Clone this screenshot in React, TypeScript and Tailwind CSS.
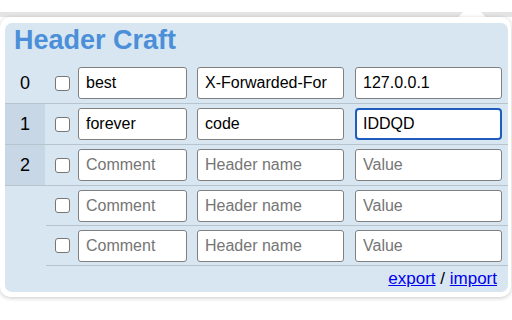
const rows = [
  { num: '0', comment: 'best', name: 'X-Forwarded-For', value: '127.0.0.1', dark: false },
  { num: '1', comment: 'forever', name: 'code', value: 'IDDQD', dark: true, focus: true },
  { num: '2', comment: '', name: '', value: '', dark: true },
  { num: '', comment: '', name: '', value: '', dark: false },
  { num: '', comment: '', name: '', value: '', dark: false },
];

function Field({ value, placeholder, width, focus }: { value: string; placeholder: string; width: string; focus?: boolean }) {
  return (
    <input
      readOnly
      defaultValue={value}
      placeholder={placeholder}
      className={
        'h-[32px] bg-white text-[16px] text-black placeholder:text-[#757575] outline-none ' +
        width +
        (focus
          ? ' border-2 border-[#1f5cc0] rounded-[4px] pl-[6px]'
          : ' border border-[#808080] rounded-[3px] pl-[7px]')
      }
    />
  );
}

export default function App() {
  return (
    <div className="relative w-[512px] h-[320px] bg-white overflow-hidden font-['Liberation_Sans',Arial,sans-serif]">
      {/* shadow band with the popup arrow */}
      <div className="absolute left-0 right-0 top-[12px] h-[5px] bg-[#e4e4e4]" />
      <svg className="absolute left-[454px] top-0" width="36" height="20" viewBox="0 0 36 20">
        <polygon points="18,1 3,19 33,19" fill="#ffffff" />
      </svg>

      <div className="relative mt-[17px] w-[511px] bg-white rounded-[10px] shadow-[0_1px_4px_rgba(0,0,0,0.22)] pl-[5px] pr-[3px] pt-[6px] pb-[5px]">
        <div className="bg-[#d8e6f2] rounded-[7px]">
          <div className="pl-[9px] pt-[2px] pb-[7px] text-[27px] leading-[31px] font-bold text-[#4a8fd8]">
            Header Craft
          </div>

          <div className="flex flex-col">
            {rows.map((r, i) => (
              <div key={i} className={'flex ' + (i < 3 ? 'border-b border-[#b7c3cd]' : '')}>
                <div
                  className={
                    'w-[40px] flex items-center justify-center text-[18px] text-black ' +
                    (r.dark ? 'bg-[#c7d7e5]' : '')
                  }
                >
                  {r.num}
                </div>
                <div
                  className={
                    'flex-1 flex items-center h-[40px] ' +
                    (i >= 3 ? 'border-b border-[#b7c3cd] ml-[1px] pl-[9px]' : 'pl-[10px]')
                  }
                >
                  <input
                    type="checkbox"
                    className="appearance-none w-[15px] h-[15px] bg-white border border-[#767676] rounded-[3px] mr-[8px]"
                  />
                  <Field value={r.comment} placeholder="Comment" width="w-[109px]" />
                  <div className="w-[10px]" />
                  <Field value={r.name} placeholder="Header name" width="w-[147px]" />
                  <div className="w-[11px]" />
                  <Field value={r.value} placeholder="Value" width="w-[147px]" focus={r.focus} />
                </div>
              </div>
            ))}
          </div>

          <div className="flex justify-end pr-[11px] pt-[3px] pb-[3px] text-[17px] leading-[20px] text-black">
            <a href="#" className="text-[#0000ee] underline">export</a>
            <span>&nbsp;/&nbsp;</span>
            <a href="#" className="text-[#0000ee] underline">import</a>
          </div>
        </div>
      </div>
    </div>
  );
}
